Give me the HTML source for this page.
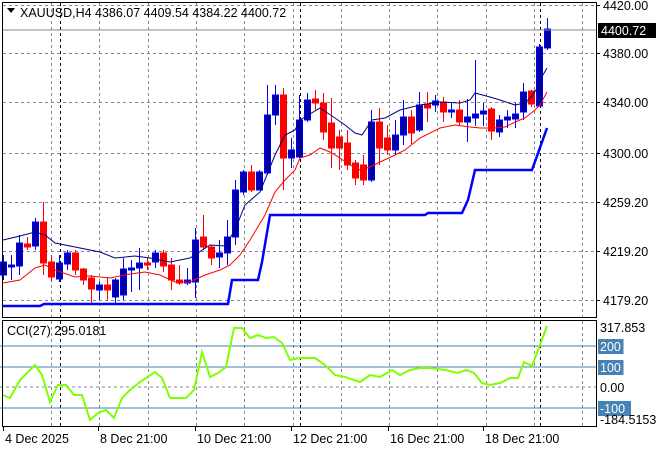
<!DOCTYPE html>
<html><head><meta charset="utf-8"><style>
html,body{margin:0;padding:0;background:#fff;}
svg{display:block;font-family:"Liberation Sans","DejaVu Sans",sans-serif;font-size:12.5px;}
</style></head><body>
<svg id="s" width="660" height="450" xmlns="http://www.w3.org/2000/svg">
<rect width="660" height="450" fill="#fff"/>
<g id="grid" stroke="#808890" stroke-width="1" stroke-dasharray="3,3"></g>
<g id="cand"></g>
<polyline fill="none" stroke="#000080" stroke-width="1" points="3,240 20,236 35,232 45,235 55,243 80,248 100,252 115,258 135,256 150,258 170,262 190,258 210,245 225,246 235,230 245,205 260,192 275,155 285,135 295,130 300,120 320,108 335,118 345,125 355,133 362,135 372,120 385,118 400,110 420,105 440,102 460,103 470,100 475,93 490,97 500,100 515,105 525,103 530,98 536,90 540,80 547,68"/>
<polyline fill="none" stroke="#ff0000" stroke-width="1" points="3,283 20,280 35,268 45,265 55,270 75,277 90,276 110,278 130,274 145,272 160,275 175,282 190,282 205,275 220,270 230,265 240,255 250,240 265,215 275,192 285,180 295,170 300,158 310,155 320,148 330,152 340,158 350,165 360,170 370,167 380,162 395,155 405,150 420,138 440,128 455,125 470,127 480,128 495,128 505,127 515,122 525,118 535,110 540,105 547,92"/>
<polyline fill="none" stroke="#0000ff" stroke-width="2.5" points="3,306 40,306 44,304 228,304 232,280 258,280 262,262 270,215 425,215 428,213 462,213 468,200 475,170 532,170 547,128"/>
<g id="cci">
<line x1="0" y1="346" x2="596" y2="346" stroke="#4682b4"/>
<line x1="0" y1="367" x2="596" y2="367" stroke="#4682b4"/>
<line x1="0" y1="408" x2="596" y2="408" stroke="#4682b4"/>
<line x1="0" y1="387" x2="596" y2="387" stroke="#808890" stroke-dasharray="3,3"/>
<polyline fill="none" stroke="#7fff00" stroke-width="2" points="3,395 10,398 20,380 35,365 42,375 50,402 58,385 66,385 74,395 82,395 90,420 98,413 106,410 114,418 122,398 130,390 140,382 155,372 162,378 170,398 178,398 186,398 194,390 202,352 210,377 218,373 226,367 234,328 242,328 250,338 258,335 266,338 274,337 282,343 290,360 300,358 315,358 325,365 335,375 345,377 360,382 370,375 380,377 392,370 400,375 410,370 420,368 430,368 445,370 458,373 466,370 474,373 482,383 490,385 500,383 510,378 518,378 524,362 532,366 540,345 547,326"/>
</g>
<rect x="2.5" y="2.5" width="594" height="315" fill="none" stroke="#000"/>
<rect x="2.5" y="320.5" width="594" height="106" fill="none" stroke="#000"/>
<line x1="3" y1="30" x2="596" y2="30" stroke="#808890"/>
<g id="ax" fill="#000"></g>
<polygon points="7,8 15,8 11,13" fill="#000"/>
<text x="20" y="17" font-size="12.5">XAUUSD,H4  4386.07 4409.54 4384.22 4400.72</text>
<text x="7" y="335" font-size="12.5">CCI(27) 295.0181</text>
</svg>
<script>
var NS="http://www.w3.org/2000/svg",s=document.getElementById('s');
function el(p,t,a,tx){var e=document.createElementNS(NS,t);for(var k in a)e.setAttribute(k,a[k]);if(tx!=null)e.textContent=tx;document.getElementById(p).appendChild(e);return e;}
var gx=[51,99,148,196,244,293,341,389,437,486,534,582];
gx.forEach(function(x){el('grid','line',{x1:x+.5,y1:3,x2:x+.5,y2:317});el('grid','line',{x1:x+.5,y1:321,x2:x+.5,y2:426});});
[5,53,102,153,202,251,300].forEach(function(y){el('grid','line',{x1:3,y1:y+.5,x2:596,y2:y+.5});});
[60,300,540].forEach(function(x){el('grid','line',{x1:x+.5,y1:3,x2:x+.5,y2:426,stroke:'#000','stroke-dasharray':'3,3'});});
var C=[
[262,275,255,280,'b'],[265,267,255,280,'b'],[243,266,235,275,'b'],[244,247,237,250,'r'],[222,246,218,250,'b'],[222,263,202,275,'r'],[262,277,255,282,'r'],[263,279,255,282,'b'],[253,264,250,270,'b'],[253,270,250,275,'r'],
[269,280,268,285,'r'],[278,289,275,305,'r'],[285,290,282,300,'b'],[285,290,277,300,'r'],[280,297,278,305,'b'],[269,295,258,300,'b'],[268,270,260,292,'b'],[263,268,248,290,'b'],[263,265,258,270,'r'],[253,262,250,268,'b'],
[253,266,250,272,'r'],[265,280,258,290,'r'],[280,283,265,285,'r'],[280,283,268,285,'b'],[240,282,228,298,'b'],[237,247,215,250,'r'],[247,258,245,265,'r'],[253,257,240,268,'b'],[237,253,220,265,'b'],[190,237,180,245,'b'],
[172,192,170,195,'b'],[172,190,165,192,'r'],[172,190,170,190,'b'],[115,173,85,175,'b'],[95,115,85,125,'b'],[95,158,88,190,'r'],[150,158,138,168,'b'],[120,157,95,158,'b'],[100,120,93,122,'b'],[99,103,90,110,'r'],
[103,132,93,140,'r'],[123,148,98,168,'r'],[137,148,130,170,'r'],[143,165,130,170,'r'],[163,178,160,185,'r'],[165,180,155,185,'r'],[122,180,110,182,'b'],[122,148,108,165,'r'],[138,150,125,155,'r'],[135,150,120,155,'b'],
[117,135,100,145,'b'],[117,133,110,144,'r'],[105,130,92,132,'b'],[104,108,92,122,'r'],[101,105,95,112,'b'],[102,112,97,122,'r'],[110,112,103,118,'b'],[110,122,100,126,'r'],[117,122,99,142,'b'],[114,118,60,126,'b'],
[111,114,103,126,'b'],[109,131,107,140,'r'],[120,132,115,137,'b'],[117,120,110,128,'b'],[114,119,103,128,'b'],[92,112,83,120,'b'],[91,104,90,107,'r'],[47,106,44,106,'b'],[29,48,18,50,'b']];
C.forEach(function(c,i){var x=3+8*i,col=c[4]=='b'?'#0000ff':'#ff0000',fill=c[4]=='b'?'#0000a0':'#ff0000';
el('cand','line',{x1:x+.5,y1:c[2],x2:x+.5,y2:c[3],stroke:col});
var h=Math.max(c[1]-c[0],2);el('cand','rect',{x:x-2.5,y:c[0],width:6,height:h,fill:fill,stroke:col,'stroke-width':1});});
[['4420.00',5],['4380.00',53],['4340.00',102],['4300.00',153],['4259.20',202],['4219.20',251],['4179.20',300]].forEach(function(a){el('ax','line',{x1:596,y1:a[1]+.5,x2:600,y2:a[1]+.5,stroke:'#000'});el('ax','text',{x:603,y:a[1]+5},a[0]);});
el('ax','rect',{x:598,y:23,width:58,height:15,fill:'#000'});el('ax','text',{x:601,y:35,fill:'#fff'},'4400.72');
el('ax','text',{x:600,y:332},'317.853');
[['200',346],['100',367],['-100',408]].forEach(function(a){el('ax','rect',{x:598,y:a[1]-7,width:a[0].length*7.5+3,height:15,fill:'#4682b4'});el('ax','text',{x:600,y:a[1]+5,fill:'#fff'},a[0]);});
el('ax','text',{x:600,y:392},'0.00');
el('ax','text',{x:600,y:424},'-184.5153');
[['4 Dec 2025',3,3],['8 Dec 21:00',98,98],['10 Dec 21:00',195,195],['12 Dec 21:00',291,291],['16 Dec 21:00',388,388],['18 Dec 21:00',483,483]].forEach(function(a){el('ax','line',{x1:a[2]+.5,y1:427,x2:a[2]+.5,y2:431,stroke:'#000'});el('ax','text',{x:a[1]+2,y:443},a[0]);});
</script>
</body></html>
